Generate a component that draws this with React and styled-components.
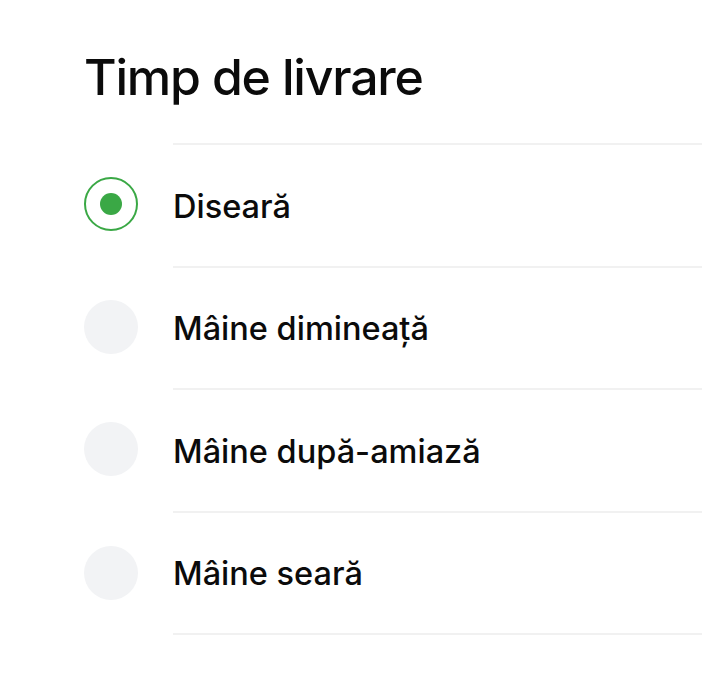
import React from "react";
import styled, { createGlobalStyle } from "styled-components";

const Global = createGlobalStyle`
  html, body { margin: 0; padding: 0; background: #ffffff; }
  body { font-family: Inter, "Noto Sans", "Liberation Sans", sans-serif; color: #0b0b0b; }
`;

const Page = styled.div`
  padding: 47px 0 0 84px;
  width: 702px;
  box-sizing: border-box;
`;

const Title = styled.h1`
  margin: 0 0 36px 0;
  font-size: 50px;
  line-height: 60px;
  font-weight: 500;
  letter-spacing: -1.2px;
`;

const List = styled.div`
  display: flex;
  flex-direction: column;
`;

const Row = styled.label`
  display: flex;
  align-items: center;
  gap: 35px;
  cursor: pointer;
`;

const Radio = styled.span`
  flex: none;
  width: 54px;
  height: 54px;
  border-radius: 50%;
  box-sizing: border-box;
  display: flex;
  align-items: center;
  justify-content: center;
  background: ${(p) => (p.$checked ? "#ffffff" : "#f2f3f5")};
  border: ${(p) => (p.$checked ? "2px solid #3aa845" : "none")};
`;

const Dot = styled.span`
  width: 22px;
  height: 22px;
  border-radius: 50%;
  background: #3aa845;
`;

const Label = styled.span`
  flex: 1;
  height: ${(p) => (p.$last ? "124.5px" : "122.5px")};
  display: flex;
  align-items: center;
  box-sizing: border-box;
  border-top: 2px solid #f1f1f1;
  border-bottom: ${(p) => (p.$last ? "2px solid #f1f1f1" : "none")};
  font-size: 32.5px;
  font-weight: 500;
  letter-spacing: 0;
  padding-top: 2px;
`;

const options = ["Diseară", "Mâine dimineață", "Mâine după-amiază", "Mâine seară"];

export default function App() {
  const selected = 0;
  return (
    <Page>
      <Global />
      <Title>Timp de livrare</Title>
      <List>
        {options.map((o, i) => (
          <Row key={o}>
            <Radio $checked={i === selected}>{i === selected && <Dot />}</Radio>
            <Label $last={i === options.length - 1}>{o}</Label>
          </Row>
        ))}
      </List>
    </Page>
  );
}
